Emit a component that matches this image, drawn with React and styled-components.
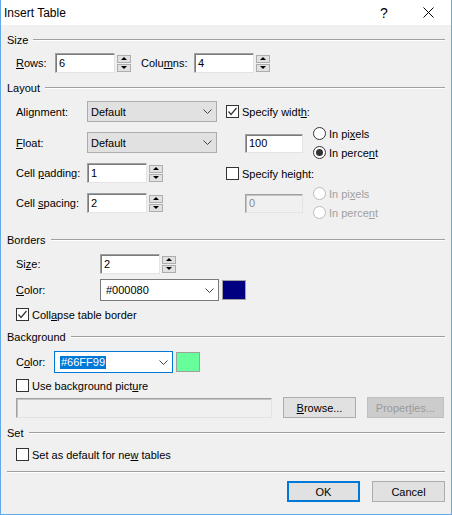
import React from "react";
import styled, { createGlobalStyle, css } from "styled-components";

const GlobalStyle = createGlobalStyle`
  html, body {
    margin: 0;
    padding: 0;
    background: #f0f0f0;
  }
  * {
    box-sizing: border-box;
  }
`;

const Window = styled.div`
  width: 452px;
  height: 515px;
  display: flex;
  flex-direction: column;
  background: #f0f0f0;
  border: 1px solid #63a9e8;
  border-top: none;
  font-family: "Liberation Sans", Arial, sans-serif;
  font-size: 11px;
  color: #000;
  cursor: default;
  user-select: none;
`;

const TitleBar = styled.div`
  height: 25px;
  flex-shrink: 0;
  display: flex;
  align-items: center;
  background: #fff;
  padding-left: 3px;
`;

const Title = styled.span`
  flex: 1;
  font-size: 12px;
`;

const CaptionButton = styled.div`
  width: ${p => p.$w}px;
  height: 25px;
  display: flex;
  align-items: center;
  justify-content: center;
  font-size: 14px;
`;

const Body = styled.div`
  flex: 1;
  display: flex;
  flex-direction: column;
  padding: 8px 6px 0;
`;

const Legend = styled.div`
  display: flex;
  align-items: center;
  height: 14px;
  margin-top: ${p => p.$mt || 0}px;

  &::after {
    content: "";
    flex: 1;
    margin-left: 5px;
    border-top: 1px solid #a0a0a0;
    border-bottom: 1px solid #fff;
  }
`;

const Row = styled.div`
  display: flex;
  align-items: center;
  height: ${p => p.$h || 20}px;
  margin-top: ${p => p.$mt || 0}px;
  margin-left: ${p => (p.$indent === undefined ? 9 : p.$indent)}px;
`;

const Label = styled.span`
  width: ${p => p.$w}px;
  margin-left: ${p => p.$ml || 0}px;
  white-space: nowrap;
  flex-shrink: 0;
  color: ${p => (p.$disabled ? "#a0a0a0" : "inherit")};
`;

const Key = styled.span`
  text-decoration: underline;
`;

const Field = styled.div`
  width: ${p => p.$w}px;
  height: ${p => p.$h || 20}px;
  margin-left: ${p => p.$ml || 0}px;
  flex-shrink: 0;
  display: flex;
  align-items: center;
  padding-left: 3px;
  background: ${p => (p.$disabled ? "#f0f0f0" : "#fff")};
  border: 1px solid;
  border-color: #a0a0a0 #e3e3e3 #e3e3e3 #a0a0a0;
  box-shadow: inset 1px 1px 0 ${p => (p.$disabled ? "#c4c4c4" : "#7a7a7a")};
  color: ${p => (p.$disabled ? "#8a8a8a" : "#000")};
`;

const Spin = styled.div`
  display: flex;
  flex-direction: column;
  gap: 1px;
  margin-left: 2px;
`;

const SpinButton = styled.div`
  width: 14px;
  height: 8px;
  display: flex;
  align-items: center;
  justify-content: center;
  background: #e1e1e1;
  border: 1px solid #adadad;

  &::after {
    content: "";
    border-left: 3px solid transparent;
    border-right: 3px solid transparent;
    ${p =>
      p.$down
        ? css`border-top: 3px solid #000;`
        : css`border-bottom: 3px solid #000;`}
  }
`;

const Combo = styled.div`
  width: ${p => p.$w}px;
  height: ${p => p.$h || 21}px;
  flex-shrink: 0;
  display: flex;
  align-items: center;
  justify-content: space-between;
  padding: 0 4px 0 ${p => (p.$editable ? 5 : 3)}px;
  background: ${p => (p.$editable ? "#fff" : "#e1e1e1")};
  border: 1px solid
    ${p => (p.$focus ? "#0078d7" : p.$editable ? "#7a7a7a" : "#adadad")};
`;

const Selected = styled.span`
  background: #0078d7;
  color: #fff;
  padding: 0 1px;
  line-height: 13px;
`;

const Swatch = styled.div`
  width: 24px;
  height: 20px;
  margin-left: 3px;
  background: ${p => p.$color};
  border: 1px solid #a0a0a0;
`;

const Box = styled.span`
  width: 13px;
  height: 13px;
  flex-shrink: 0;
  display: flex;
  align-items: center;
  justify-content: center;
  margin-right: 3px;
  background: #fff;
  border: 1px solid #333;
`;

const RadioDot = styled.span`
  width: 13px;
  height: 13px;
  flex-shrink: 0;
  display: flex;
  align-items: center;
  justify-content: center;
  margin-right: 3px;
  border-radius: 50%;
  background: #fff;
  border: 1px solid ${p => (p.$disabled ? "#bcbcbc" : "#333")};

  &::after {
    content: "";
    width: 7px;
    height: 7px;
    border-radius: 50%;
    background: ${p => (p.$on ? "#333" : "transparent")};
  }
`;

const RadioGroup = styled.div`
  display: flex;
  flex-direction: column;
  margin-left: ${p => p.$ml || 0}px;
`;

const RadioRow = styled.div`
  display: flex;
  align-items: center;
  height: 19px;
  color: ${p => (p.$disabled ? "#a0a0a0" : "inherit")};
`;

const LayoutArea = styled.div`
  display: flex;
  margin: 6px 0 0 9px;
`;

const LayoutGrid = styled.div`
  display: grid;
  grid-template-columns: 71px 130px;
  grid-template-rows: 21px 21px 20px 20px;
  row-gap: 10px;
  align-items: center;
`;

const Cell = styled.div`
  display: flex;
  align-items: center;
`;

const SideColumn = styled.div`
  display: flex;
  flex-direction: column;
  margin-left: 9px;
`;

const UnitBlock = styled.div`
  display: flex;
  align-items: center;
  height: 38px;
  margin-top: ${p => p.$mt || 0}px;
`;

const Button = styled.div`
  width: ${p => p.$w || 73}px;
  height: 21px;
  margin-left: ${p => p.$ml || 0}px;
  flex-shrink: 0;
  display: flex;
  align-items: center;
  justify-content: center;
  background: #e1e1e1;
  border: 1px solid #adadad;
  ${p =>
    p.$primary &&
    css`
      border: 2px solid #0078d7;
    `}
  ${p =>
    p.$disabled &&
    css`
      background: #cccccc;
      border-color: #bfbfbf;
      color: #9a9a9a;
    `}
`;

const Separator = styled.div`
  margin-top: 8px;
  border-top: 1px solid #a0a0a0;
  border-bottom: 1px solid #fff;
`;

const Footer = styled.div`
  display: flex;
  justify-content: flex-end;
  gap: 12px;
  margin-top: 8px;
`;

const Chevron = () => (
  <svg width="9" height="5" viewBox="0 0 9 5">
    <polyline points="0.5,0.5 4.5,4.5 8.5,0.5" fill="none" stroke="#444" strokeWidth="1" />
  </svg>
);

const CloseGlyph = () => (
  <svg width="11" height="11" viewBox="0 0 11 11">
    <path d="M0.5 0.5 L10.5 10.5 M10.5 0.5 L0.5 10.5" stroke="#000" strokeWidth="1" />
  </svg>
);

const Spinner = () => (
  <Spin>
    <SpinButton />
    <SpinButton $down />
  </Spin>
);

const Check = ({ on, children }) => (
  <>
    <Box>
      {on && (
        <svg width="11" height="11" viewBox="0 0 11 11">
          <polyline points="1.5,5.5 4,8.5 9.5,2" fill="none" stroke="#333" strokeWidth="1.2" />
        </svg>
      )}
    </Box>
    <span>{children}</span>
  </>
);

const Radio = ({ on, disabled, children }) => (
  <RadioRow $disabled={disabled}>
    <RadioDot $on={on} $disabled={disabled} />
    <span>{children}</span>
  </RadioRow>
);

const Units = ({ pixels, disabled }) => (
  <RadioGroup $ml={10}>
    <Radio on={pixels} disabled={disabled}>
      In pi<Key>x</Key>els
    </Radio>
    <Radio on={!pixels && !disabled} disabled={disabled}>
      In perce<Key>n</Key>t
    </Radio>
  </RadioGroup>
);

export default function App() {
  return (
    <>
      <GlobalStyle />
      <Window>
        <TitleBar>
          <Title>Insert Table</Title>
          <CaptionButton $w={42}>?</CaptionButton>
          <CaptionButton $w={46}>
            <CloseGlyph />
          </CaptionButton>
        </TitleBar>

        <Body>
          <Legend>Size</Legend>
          <Row $mt={6}>
            <Label $w={39}>
              <Key>R</Key>ows:
            </Label>
            <Field $w={60}>6</Field>
            <Spinner />
            <Label $w={53} $ml={10}>
              Colu<Key>m</Key>ns:
            </Label>
            <Field $w={60}>4</Field>
            <Spinner />
          </Row>

          <Legend $mt={8}>Layout</Legend>
          <LayoutArea>
            <LayoutGrid>
              <Label>
                Ali<Key>g</Key>nment:
              </Label>
              <Combo $w={130}>
                Default
                <Chevron />
              </Combo>
              <Label>
                <Key>F</Key>loat:
              </Label>
              <Combo $w={130}>
                Default
                <Chevron />
              </Combo>
              <Label>
                Cell <Key>p</Key>adding:
              </Label>
              <Cell>
                <Field $w={60}>1</Field>
                <Spinner />
              </Cell>
              <Label>
                Cell <Key>s</Key>pacing:
              </Label>
              <Cell>
                <Field $w={60}>2</Field>
                <Spinner />
              </Cell>
            </LayoutGrid>

            <SideColumn>
              <Row $h={21} $indent={0}>
                <Check on>
                  Specify widt<Key>h</Key>:
                </Check>
              </Row>
              <UnitBlock $mt={2}>
                <Field $w={58} $h={19} $ml={19}>
                  100
                </Field>
                <Units />
              </UnitBlock>
              <Row $h={21} $mt={1} $indent={0}>
                <Check>
                  Specify hei<Key>g</Key>ht:
                </Check>
              </Row>
              <UnitBlock>
                <Field $w={58} $h={19} $ml={19} $disabled>
                  0
                </Field>
                <Units disabled pixels={false} />
              </UnitBlock>
            </SideColumn>
          </LayoutArea>

          <Legend $mt={11}>Borders</Legend>
          <Row $mt={7}>
            <Label $w={84}>
              Si<Key>z</Key>e:
            </Label>
            <Field $w={60}>2</Field>
            <Spinner />
          </Row>
          <Row $mt={5} $h={22}>
            <Label $w={84}>
              <Key>C</Key>olor:
            </Label>
            <Combo $w={119} $h={22} $editable>
              #000080
              <Chevron />
            </Combo>
            <Swatch $color="#000080" />
          </Row>
          <Row $mt={5} $h={17}>
            <Check on>
              Coll<Key>a</Key>pse table border
            </Check>
          </Row>

          <Legend $mt={7}>Background</Legend>
          <Row $mt={7} $h={22}>
            <Label $w={38}>
              C<Key>o</Key>lor:
            </Label>
            <Combo $w={119} $h={22} $editable $focus>
              <Selected>#66FF99</Selected>
              <Chevron />
            </Combo>
            <Swatch $color="#66ff99" />
          </Row>
          <Row $mt={4} $h={17}>
            <Check>
              Use background pict<Key>u</Key>re
            </Check>
          </Row>
          <Row $mt={3} $h={21}>
            <Field $w={256} $disabled />
            <Button $ml={11}>
              <span>
                <Key>B</Key>rowse...
              </span>
            </Button>
            <Button $ml={11} $w={77} $disabled>
              <span>
                Proper<Key>t</Key>ies...
              </span>
            </Button>
          </Row>

          <Legend $mt={8}>Set</Legend>
          <Row $mt={6} $h={17}>
            <Check>
              Set as default for ne<Key>w</Key> tables
            </Check>
          </Row>

          <Separator />
          <Footer>
            <Button $primary>OK</Button>
            <Button>Cancel</Button>
          </Footer>
        </Body>
      </Window>
    </>
  );
}
